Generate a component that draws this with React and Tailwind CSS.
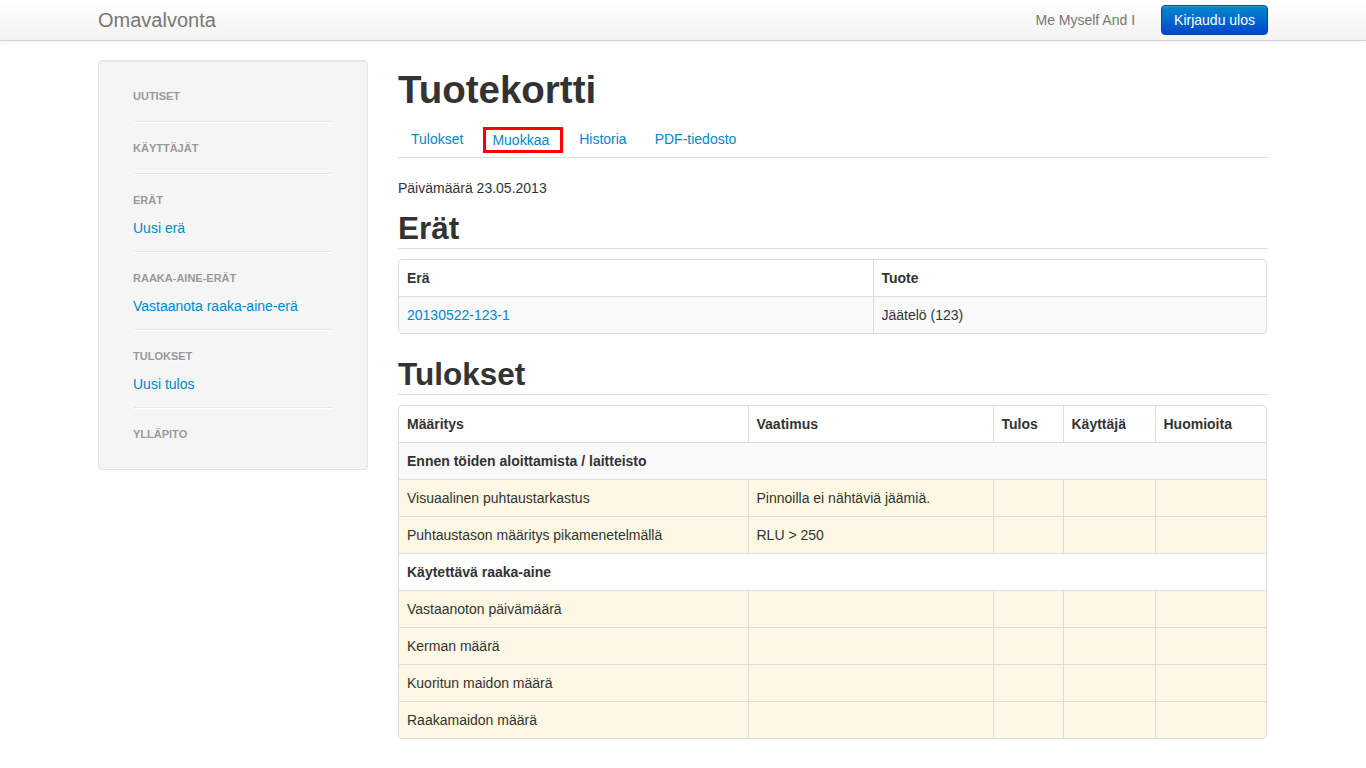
import React from 'react';

const font = { fontFamily: '"Liberation Sans", Arial, sans-serif' };

const NavHeader = ({ children }) => (
    <div className="px-0 py-[3px] text-[11px] leading-[20px] font-bold uppercase text-[#999] [text-shadow:0_1px_0_rgba(255,255,255,0.5)]">
        {children}
    </div>
);

const NavLink = ({ children }) => (
    <div className="pt-[5px] pb-[1px] text-[14px] leading-[20px] text-[#0088cc]">{children}</div>
);

const Divider = () => (
    <div className="mx-px my-[12px] h-px bg-[#e5e5e5] border-b border-white box-content" />
);

const Sidebar = () => (
    <div className="w-[270px] shrink-0 self-start bg-[#f5f5f5] border border-[#e3e3e3] rounded-[4px] px-[34px] py-[22px] shadow-[inset_0_1px_1px_rgba(0,0,0,0.05)]">
        <NavHeader>Uutiset</NavHeader>
        <Divider />
        <NavHeader>Käyttäjät</NavHeader>
        <Divider />
        <NavHeader>Erät</NavHeader>
        <NavLink>Uusi erä</NavLink>
        <Divider />
        <NavHeader>Raaka-aine-erät</NavHeader>
        <NavLink>Vastaanota raaka-aine-erä</NavLink>
        <Divider />
        <NavHeader>Tulokset</NavHeader>
        <NavLink>Uusi tulos</NavLink>
        <Divider />
        <NavHeader>Ylläpito</NavHeader>
    </div>
);

const Tab = ({ children }) => (
    <a className="block border border-transparent px-[12px] py-[8px] mr-[2px] leading-[20px] text-[#0088cc]">{children}</a>
);

const cell = 'px-[8px] py-[8px] leading-[20px] text-left align-top border-t border-[#dddddd]';

const rows = [
    { group: 'Ennen töiden aloittamista / laitteisto', bg: 'bg-[#f9f9f9]' },
    { name: 'Visuaalinen puhtaustarkastus', req: 'Pinnoilla ei nähtäviä jäämiä.' },
    { name: 'Puhtaustason määritys pikamenetelmällä', req: 'RLU > 250' },
    { group: 'Käytettävä raaka-aine', bg: 'bg-white' },
    { name: 'Vastaanoton päivämäärä', req: '' },
    { name: 'Kerman määrä', req: '' },
    { name: 'Kuoritun maidon määrä', req: '' },
    { name: 'Raakamaidon määrä', req: '' },
];

export default function App() {
    return (
        <div style={font} className="min-h-[768px] bg-white text-[14px] leading-[20px] text-[#333]">
            {/* Navbar */}
            <div className="h-[41px] bg-gradient-to-b from-white to-[#f2f2f2] border-b border-[#d4d4d4] shadow-[0_1px_4px_rgba(0,0,0,0.065)]">
                <div className="w-[1170px] mx-auto flex items-center h-[40px]">
                    <div className="text-[20px] leading-[20px] text-[#777]">Omavalvonta</div>
                    <div className="ml-auto text-[#777]">Me Myself And I</div>
                    <button className="ml-[26px] h-[30px] px-[12px] rounded-[4px] border border-[#0044aa] bg-gradient-to-b from-[#0088cc] to-[#0044cc] text-white text-[14px] leading-[20px] shadow-[inset_0_1px_0_rgba(255,255,255,0.2)]">
                        Kirjaudu ulos
                    </button>
                </div>
            </div>

            <div className="w-[1170px] mx-auto flex gap-[30px] pt-[19px] pb-[30px]">
                <Sidebar />

                <div className="w-[870px]">
                    <h1 className="mt-[10px] mb-[10px] text-[38.5px] leading-[40px] font-bold text-[#333]">Tuotekortti</h1>

                    <div className="flex items-end border-b border-[#dddddd] mb-[20px]">
                        <div className="-mb-px"><Tab>Tulokset</Tab></div>
                        <div className="-mb-px">
                            <a className="block border border-transparent pl-[4px] pr-0 pt-[6px] pb-[4px] mr-[2px] leading-[20px] text-[#0088cc]">
                                <span className="block border-[3px] border-[#ff0000] pl-[6px] pr-[11px] leading-[20px]">Muokkaa</span>
                            </a>
                        </div>
                        <div className="-mb-px"><Tab>Historia</Tab></div>
                        <div className="-mb-px"><Tab>PDF-tiedosto</Tab></div>
                    </div>

                    <p className="mb-[10px]">Päivämäärä 23.05.2013</p>

                    <h2 className="text-[31.5px] leading-[40px] font-bold border-b border-[#dddddd] mb-[10px]">Erät</h2>

                    <div className="w-[869px] border border-[#dddddd] rounded-[4px] overflow-hidden mb-[20px]">
                        <table className="w-full border-collapse">
                            <thead>
                                <tr>
                                    <th className={`${cell} border-t-0 w-[474px] font-bold`}>Erä</th>
                                    <th className={`${cell} border-t-0 border-l font-bold`}>Tuote</th>
                                </tr>
                            </thead>
                            <tbody>
                                <tr className="bg-[#f9f9f9]">
                                    <td className={`${cell} text-[#0088cc]`}>20130522-123-1</td>
                                    <td className={`${cell} border-l`}>Jäätelö (123)</td>
                                </tr>
                            </tbody>
                        </table>
                    </div>

                    <h2 className="text-[31.5px] leading-[40px] font-bold border-b border-[#dddddd] mb-[10px]">Tulokset</h2>

                    <div className="w-[869px] border border-[#dddddd] rounded-[4px] overflow-hidden">
                        <table className="w-full border-collapse table-fixed">
                            <thead>
                                <tr>
                                    <th className={`${cell} border-t-0 w-[349px] font-bold`}>Määritys</th>
                                    <th className={`${cell} border-t-0 border-l w-[245px] font-bold`}>Vaatimus</th>
                                    <th className={`${cell} border-t-0 border-l w-[70px] font-bold`}>Tulos</th>
                                    <th className={`${cell} border-t-0 border-l w-[92px] font-bold`}>Käyttäjä</th>
                                    <th className={`${cell} border-t-0 border-l font-bold`}>Huomioita</th>
                                </tr>
                            </thead>
                            <tbody>
                                {rows.map((r, i) =>
                                    r.group ? (
                                        <tr key={i} className={r.bg}>
                                            <td colSpan={5} className={`${cell} font-bold`}>{r.group}</td>
                                        </tr>
                                    ) : (
                                        <tr key={i} className="bg-[#fcf8e3]">
                                            <td className={cell}>{r.name}</td>
                                            <td className={`${cell} border-l`}>{r.req}</td>
                                            <td className={`${cell} border-l`}></td>
                                            <td className={`${cell} border-l`}></td>
                                            <td className={`${cell} border-l`}></td>
                                        </tr>
                                    )
                                )}
                            </tbody>
                        </table>
                    </div>
                </div>
            </div>
        </div>
    );
}
